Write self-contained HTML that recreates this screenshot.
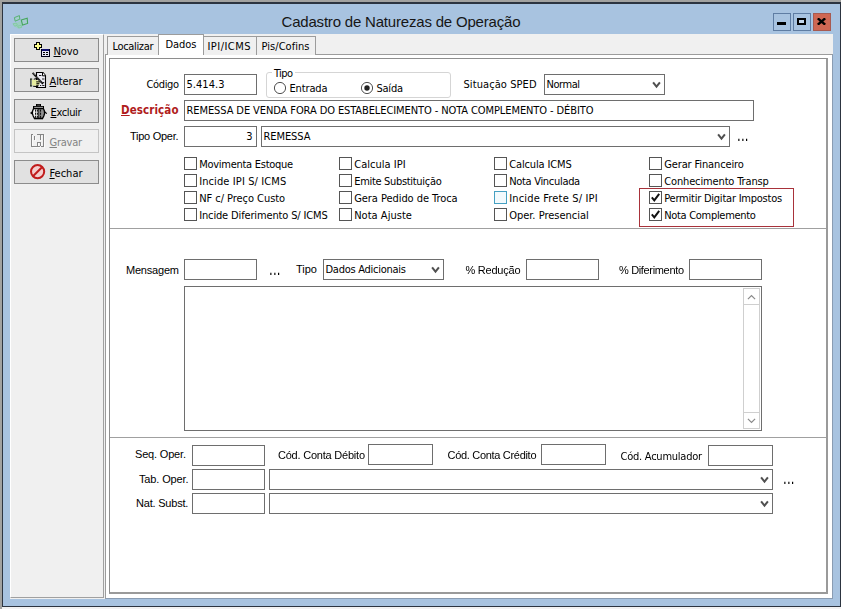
<!DOCTYPE html>
<html lang="pt-BR"><head><meta charset="utf-8"><title>Cadastro de Naturezas de Operação</title><style>
html,body{margin:0;padding:0;background:#a2a2a0;}
#w{position:relative;width:841px;height:609px;overflow:hidden;}
#w div,#w span{position:absolute;}
#w span u{position:static;}
.t{font:11px "DejaVu Sans Condensed","Liberation Sans",sans-serif;color:#000;white-space:nowrap;line-height:13px;}
.m{font:11px "Liberation Sans",sans-serif;color:#000;white-space:nowrap;line-height:13px;}
.title{font:15px "Liberation Sans",sans-serif;color:#161616;white-space:nowrap;line-height:20px;}
.dis{color:#838383;}
.dots{font-size:13px;transform:scaleY(1.35);transform-origin:0 11px;will-change:transform;}
.desc{font-weight:bold;color:#b01c1c;font-size:11.5px;}
</style></head><body><div id="w">
<div style="left:0px;top:0px;width:841px;height:609px;background:#a2a2a0;"></div>
<div style="left:2px;top:607px;width:839px;height:2px;background:#f2f2f2;"></div>
<div style="left:2px;top:2px;width:839px;height:605px;background:#2c3440;"></div>
<div style="left:3px;top:4px;width:837px;height:602px;background:#a8c3e0;"></div>
<span id="t0" class="title" style="left:281.5px;top:12px;letter-spacing:-0.192px;">Cadastro de Naturezas de Operação</span>
<svg style="position:absolute;left:10px;top:13px" width="20" height="18" viewBox="0 0 20 18"><path d="M2.5 10.5 L7 9.5 L10.5 8 L12.5 11.5 L12 14.8 L8 15.6 L4.5 13.5 Z" fill="#8fd6a8" opacity="0.55"/><path d="M4.4 4.6 L9.4 2.6 L9.8 6.2 L5.2 8.2 Z" fill="#a4d4c4" fill-opacity="0.6" stroke="#4fae68" stroke-width="0.9"/><path d="M11.2 7 L17.2 5.3 L17.6 10.4 L12.6 12 Z" fill="#a4d4c4" fill-opacity="0.5" stroke="#45a65c" stroke-width="1.1"/><path d="M3 10.8 L6.4 10 L7.4 12.2 L4.6 13.2 Z M7.6 13 L11.4 12.4 L11.6 14.4 L8.6 15 Z" fill="none" stroke="#7ccc98" stroke-width="0.7"/></svg>
<div style="left:773px;top:13px;width:18px;height:18px;border:1px solid #5f7da3;box-sizing:border-box;background:#a8c3e0;"><div style="left:3px;top:8px;width:9px;height:3px;background:#000"></div></div>
<div style="left:793px;top:13px;width:18px;height:18px;border:1px solid #5f7da3;box-sizing:border-box;background:#a8c3e0;"><div style="left:3px;top:4px;width:9px;height:7px;box-sizing:border-box;border:2px solid #000;background:#c4d6ea"></div></div>
<div style="left:813px;top:13px;width:18px;height:18px;border:1px solid #a85a50;box-sizing:border-box;background:#cf6753;"><svg style="position:absolute;left:3px;top:4px" width="9" height="7" viewBox="0 0 9 7"><path d="M0.8 0.3 L8.2 6.7 M8.2 0.3 L0.8 6.7" stroke="#000" stroke-width="2.3"/></svg></div>
<div style="left:10px;top:34px;width:823px;height:565px;background:#f0f0f0;"></div>
<div style="left:10px;top:34px;width:94px;height:564px;background:#f0f0f0;border:1px solid #fff;border-right-color:#a0a0a0;border-bottom-color:#a0a0a0;box-sizing:border-box;"></div>
<div style="left:14px;top:38px;width:85px;height:24px;background:#e1e1e1;border:1px solid #8c8c8c;box-sizing:border-box;"></div>
<span id="t1" class="t btn" style="left:53.5px;top:45px;letter-spacing:-0.125px;"><u>N</u>ovo</span>
<div style="left:14px;top:68px;width:85px;height:24px;background:#e1e1e1;border:1px solid #8c8c8c;box-sizing:border-box;"></div>
<span id="t2" class="t btn" style="left:49.5px;top:75px;letter-spacing:-0.117px;"><u>A</u>lterar</span>
<div style="left:14px;top:99px;width:85px;height:24px;background:#e1e1e1;border:1px solid #8c8c8c;box-sizing:border-box;"></div>
<span id="t3" class="t btn" style="left:50.5px;top:106px;letter-spacing:-0.37px;"><u>E</u>xcluir</span>
<div style="left:14px;top:129px;width:85px;height:24px;background:#f0f0f0;border:1px solid #c4c4c4;box-sizing:border-box;"></div>
<span id="t4" class="t btn dis" style="left:49.5px;top:136px;letter-spacing:-0.259px;"><u>G</u>ravar</span>
<div style="left:14px;top:160px;width:85px;height:24px;background:#e1e1e1;border:1px solid #8c8c8c;box-sizing:border-box;"></div>
<span id="t5" class="t btn" style="left:49.5px;top:167px;letter-spacing:-0.006px;"><u>F</u>echar</span>
<svg style="position:absolute;left:34px;top:42px" width="16" height="15" viewBox="0 0 16 15" shape-rendering="crispEdges"><rect x="2" y="0" width="4" height="8" fill="#000"/><rect x="0" y="2" width="8" height="4" fill="#000"/><rect x="3" y="1" width="2" height="6" fill="#ffff8c"/><rect x="1" y="3" width="6" height="2" fill="#ffff8c"/><rect x="7" y="7" width="9" height="8" fill="#000018"/><rect x="8" y="7" width="7" height="2" fill="#101070"/><rect x="8" y="9" width="7" height="5" fill="#e6e6f6"/><rect x="9" y="10" width="2" height="1" fill="#000"/><rect x="12" y="10" width="2" height="1" fill="#000"/><rect x="9" y="12" width="2" height="1" fill="#000"/><rect x="12" y="12" width="2" height="1" fill="#000"/></svg>
<svg style="position:absolute;left:30px;top:71px" width="17" height="18" viewBox="0 0 17 18"><path d="M6.5 1.5 H13 L15.5 4.5 V16.5 H6.5 Z" fill="#ececf4" stroke="#000" stroke-width="1.1"/><path d="M12.5 1.5 V4.8 H15.5" fill="#fff" stroke="#000" stroke-width="1"/><path d="M9 4.5 h2.4 M12 8 h2.4 M13 11.5 h1.2 M10 14.5 h1.2 M12.2 14.5 h2.2" stroke="#222" stroke-width="1.2" fill="none"/><path d="M2 8.8 L4 8.4 L7.5 9.3 L10 10.6 L9.6 13 L8.2 14.8 L2 14.6 Z" fill="#e6eda0"/><path d="M0.9 8 V15 M0 8 H2.2 M0 15 H2.2" stroke="#0a1a0a" stroke-width="1.1" fill="none"/><path d="M3.8 8.2 L6.5 7.6 L9.8 9.4 M6.2 10.9 H10.6 M6.4 12.7 H9.4 M6.4 14.3 H8.6 M3.2 15.3 L8.2 15.6" stroke="#000" stroke-width="1" fill="none"/><path d="M2.6 1.8 L13 12.8" stroke="#000" stroke-width="1.7"/><path d="M2.6 1.8 L12.2 12" stroke="#e8e8e8" stroke-width="0.7" stroke-dasharray="1 1"/></svg>
<svg style="position:absolute;left:30px;top:103px" width="18" height="17" viewBox="0 0 18 17"><defs><linearGradient id="tg" x1="0" x2="1" y1="0" y2="0"><stop offset="0" stop-color="#fff"/><stop offset="0.45" stop-color="#e8e8e8"/><stop offset="0.62" stop-color="#9a9a9a"/><stop offset="1" stop-color="#8c8c8c"/></linearGradient></defs><rect x="6" y="1" width="5" height="2.2" fill="#000"/><rect x="7.2" y="1.8" width="2.8" height="0.6" fill="#9a9a9a"/><rect x="3" y="3" width="11" height="2.8" fill="#000"/><rect x="4.2" y="3.9" width="8.8" height="0.7" fill="#f4f4f4"/><path d="M3.6 5.6 L2.6 8 L2.4 10.5 L3.2 13 L4.4 15.4 H12.6 L13.8 13 L14.6 10.5 L14.4 8 L13.4 5.6 Z" fill="url(#tg)" stroke="#000" stroke-width="1.3"/><path d="M5.6 6.5 V14.8 M7.4 6.5 V14.8 M10.6 6.5 V14.8" stroke="#000" stroke-width="1" stroke-dasharray="2.2 0.9"/><path d="M8.8 6 V15" stroke="#000" stroke-width="1"/><path d="M2.4 8.8 L0.9 9.9 L2.4 11 M14.6 8.8 L16.8 10.6" fill="none" stroke="#000" stroke-width="1.1"/><path d="M4 15.6 H13" stroke="#000" stroke-width="1.4"/></svg>
<svg style="position:absolute;left:31px;top:134px" width="15" height="15" viewBox="0 0 15 15" shape-rendering="crispEdges"><g fill="#fafafa"><rect x="1" y="1" width="1" height="12"/><rect x="2" y="13" width="8" height="1"/><rect x="13" y="1" width="1" height="13"/><rect x="4" y="3" width="1" height="4"/><rect x="10" y="2" width="1" height="5"/><rect x="7" y="9" width="1" height="4"/><rect x="10" y="9" width="1" height="4"/></g><g fill="#868686"><rect x="0" y="0" width="1" height="13"/><rect x="0" y="0" width="2" height="1"/><rect x="1" y="12" width="8" height="1"/><rect x="10" y="12" width="2" height="1"/><rect x="12" y="0" width="1" height="13"/><rect x="6" y="0" width="7" height="1"/><rect x="3" y="2" width="1" height="4"/><rect x="9" y="1" width="1" height="5"/><rect x="6" y="8" width="1" height="4"/><rect x="9" y="8" width="1" height="4"/><rect x="6" y="8" width="4" height="1"/></g></svg>
<svg style="position:absolute;left:29px;top:163px" width="17" height="17" viewBox="0 0 17 17"><circle cx="8.6" cy="8.6" r="6.6" fill="#f3cfcf" stroke="#c01c1c" stroke-width="2"/><path d="M4.2 13 L13 4.2" stroke="#c01c1c" stroke-width="2"/></svg>

<div style="left:105px;top:54px;width:728px;height:545px;background:#fff;border:1px solid #9c9c9c;border-right-color:#8a9cb2;border-bottom-color:#8a9cb2;box-sizing:border-box;"></div>
<div style="left:107px;top:36px;width:52px;height:19px;background:#f0f0f0;border:1px solid #9c9c9c;border-bottom:none;box-sizing:border-box;"></div>
<span id="t6" class="t" style="left:112.5px;top:40px;z-index:4;letter-spacing:-0.338px;">Localizar</span>
<div style="left:203px;top:36px;width:54px;height:19px;background:#f0f0f0;border:1px solid #9c9c9c;border-bottom:none;box-sizing:border-box;"></div>
<span id="t7" class="t" style="left:207.5px;top:40px;z-index:4;letter-spacing:0.458px;">IPI/ICMS</span>
<div style="left:256px;top:36px;width:60px;height:19px;background:#f0f0f0;border:1px solid #9c9c9c;border-bottom:none;box-sizing:border-box;"></div>
<span id="t8" class="t" style="left:261.5px;top:40px;z-index:4;letter-spacing:0.043px;">Pis/Cofins</span>
<div style="left:158px;top:34px;width:46px;height:21px;background:#fff;border:1px solid #9c9c9c;border-bottom:none;box-sizing:border-box;z-index:3;"></div>
<span id="t9" class="t" style="left:165.5px;top:38px;z-index:4;letter-spacing:-0.047px;">Dados</span>
<div style="left:109px;top:58px;width:719px;height:536px;border:1px solid #8e8e8e;border-right:2px solid #9a9a9a;border-bottom:2px solid #9a9a9a;box-sizing:border-box;background:#fff;"></div>
<div style="left:110px;top:228px;width:716px;height:1px;background:#a0a0a0;"></div>
<div style="left:110px;top:437px;width:716px;height:1px;background:#a0a0a0;"></div>
<span id="t10" class="t" style="left:146.5px;top:78px;letter-spacing:-0.369px;">Código</span>
<div style="left:184px;top:74px;width:73px;height:21px;border:1px solid #6e6e6e;box-sizing:border-box;background:#fff;"></div>
<span id="t11" class="t" style="left:186.5px;top:78px;letter-spacing:0.039px;">5.414.3</span>
<div style="left:266px;top:72px;width:185px;height:26px;border:1px solid #d5d5d5;border-radius:3px;box-sizing:border-box;"></div>
<div style="left:272px;top:70px;width:23px;height:6px;background:#fff;"></div>
<span id="t12" class="t" style="left:274.0px;top:67px;letter-spacing:-0.599px;">Tipo</span>
<svg style="position:absolute;left:273px;top:81px" width="14" height="14" viewBox="0 0 14 14"><circle cx="7" cy="7" r="5.6" fill="#fff" stroke="#505050" stroke-width="1"/></svg>
<span id="t13" class="t" style="left:289.5px;top:82px;letter-spacing:-0.148px;">Entrada</span>
<svg style="position:absolute;left:360px;top:81px" width="14" height="14" viewBox="0 0 14 14"><circle cx="7" cy="7" r="5.6" fill="#fff" stroke="#505050" stroke-width="1"/><circle cx="7" cy="7" r="2.7" fill="#222"/></svg>
<span id="t14" class="t" style="left:376.5px;top:82px;letter-spacing:-0.238px;">Saída</span>
<span id="t15" class="t" style="left:463.5px;top:78px;letter-spacing:0.077px;">Situação SPED</span>
<div style="left:544px;top:74px;width:121px;height:21px;border:1px solid #6e6e6e;box-sizing:border-box;background:#fff;"></div>
<svg style="position:absolute;left:651px;top:81px" width="11" height="8" viewBox="0 0 11 8"><path d="M2.1 1.3 L5.5 5.6 L8.9 1.3" fill="none" stroke="#505050" stroke-width="2"/></svg>
<span id="t16" class="t" style="left:546.5px;top:78px;letter-spacing:-0.459px;">Normal</span>
<span id="t17" class="t desc" style="left:121.0px;top:104px;letter-spacing:0.09px;"><u>D</u>escrição</span>
<div style="left:184px;top:100px;width:570px;height:21px;border:1px solid #6e6e6e;box-sizing:border-box;background:#fff;"></div>
<span id="t18" class="t" style="left:186.5px;top:104px;letter-spacing:-0.094px;">REMESSA DE VENDA FORA DO ESTABELECIMENTO - NOTA COMPLEMENTO - DÉBITO</span>
<span id="t19" class="m" style="left:130.0px;top:130px;letter-spacing:-0.273px;">Tipo Oper.</span>
<div style="left:184px;top:126px;width:73px;height:21px;border:1px solid #6e6e6e;box-sizing:border-box;background:#fff;"></div>
<span id="t20" class="t" style="right:588.5px;top:130px;">3</span>
<div style="left:261px;top:126px;width:469px;height:21px;border:1px solid #6e6e6e;box-sizing:border-box;background:#fff;"></div>
<svg style="position:absolute;left:716px;top:133px" width="11" height="8" viewBox="0 0 11 8"><path d="M2.1 1.3 L5.5 5.6 L8.9 1.3" fill="none" stroke="#505050" stroke-width="2"/></svg>
<span id="t21" class="t" style="left:263.5px;top:130px;letter-spacing:-0.078px;">REMESSA</span>
<span id="t22" class="dots t" style="left:737.1px;top:130px;letter-spacing:0.18px;">...</span>
<div style="left:184px;top:157px;width:13px;height:13px;border:1px solid #555;box-sizing:border-box;background:#fff;"></div>
<span id="t23" class="t" style="left:199.2px;top:158px;letter-spacing:-0.268px;">Movimenta Estoque</span>
<div style="left:339px;top:157px;width:13px;height:13px;border:1px solid #555;box-sizing:border-box;background:#fff;"></div>
<span id="t24" class="t" style="left:354.2px;top:158px;letter-spacing:0.03px;">Calcula IPI</span>
<div style="left:494px;top:157px;width:13px;height:13px;border:1px solid #555;box-sizing:border-box;background:#fff;"></div>
<span id="t25" class="t" style="left:509.2px;top:158px;letter-spacing:-0.142px;">Calcula ICMS</span>
<div style="left:649px;top:157px;width:13px;height:13px;border:1px solid #555;box-sizing:border-box;background:#fff;"></div>
<span id="t26" class="t" style="left:664.2px;top:158px;letter-spacing:-0.128px;">Gerar Financeiro</span>
<div style="left:184px;top:174px;width:13px;height:13px;border:1px solid #555;box-sizing:border-box;background:#fff;"></div>
<span id="t27" class="t" style="left:199.2px;top:175px;letter-spacing:0.102px;">Incide IPI S/ ICMS</span>
<div style="left:339px;top:174px;width:13px;height:13px;border:1px solid #555;box-sizing:border-box;background:#fff;"></div>
<span id="t28" class="t" style="left:354.2px;top:175px;letter-spacing:-0.314px;">Emite Substituição</span>
<div style="left:494px;top:174px;width:13px;height:13px;border:1px solid #555;box-sizing:border-box;background:#fff;"></div>
<span id="t29" class="t" style="left:509.2px;top:175px;letter-spacing:-0.305px;">Nota Vinculada</span>
<div style="left:649px;top:174px;width:13px;height:13px;border:1px solid #555;box-sizing:border-box;background:#fff;"></div>
<span id="t30" class="t" style="left:664.2px;top:175px;letter-spacing:-0.136px;">Conhecimento Transp</span>
<div style="left:184px;top:191px;width:13px;height:13px;border:1px solid #555;box-sizing:border-box;background:#fff;"></div>
<span id="t31" class="t" style="left:199.2px;top:192px;letter-spacing:-0.048px;">NF c/ Preço Custo</span>
<div style="left:339px;top:191px;width:13px;height:13px;border:1px solid #555;box-sizing:border-box;background:#fff;"></div>
<span id="t32" class="t" style="left:354.2px;top:192px;letter-spacing:-0.06px;">Gera Pedido de Troca</span>
<div style="left:494px;top:191px;width:13px;height:13px;border:1px solid #45a0c2;box-sizing:border-box;background:#f2fafd;"></div>
<span id="t33" class="t" style="left:509.2px;top:192px;letter-spacing:0.173px;">Incide Frete S/ IPI</span>
<div style="left:649px;top:191px;width:13px;height:13px;border:1px solid #555;box-sizing:border-box;background:#fff;"><svg style="position:absolute;left:0;top:0" width="11" height="11" viewBox="0 0 11 11"><path d="M1.8 5.4 L4.3 8.3 L9.2 1.9" fill="none" stroke="#111" stroke-width="2"/></svg></div>
<span id="t34" class="t" style="left:664.2px;top:192px;letter-spacing:-0.228px;">Permitir Digitar Impostos</span>
<div style="left:184px;top:208px;width:13px;height:13px;border:1px solid #555;box-sizing:border-box;background:#fff;"></div>
<span id="t35" class="t" style="left:199.2px;top:209px;letter-spacing:-0.146px;">Incide Diferimento S/ ICMS</span>
<div style="left:339px;top:208px;width:13px;height:13px;border:1px solid #555;box-sizing:border-box;background:#fff;"></div>
<span id="t36" class="t" style="left:354.2px;top:209px;letter-spacing:0.023px;">Nota Ajuste</span>
<div style="left:494px;top:208px;width:13px;height:13px;border:1px solid #555;box-sizing:border-box;background:#fff;"></div>
<span id="t37" class="t" style="left:509.2px;top:209px;letter-spacing:-0.008px;">Oper. Presencial</span>
<div style="left:649px;top:208px;width:13px;height:13px;border:1px solid #555;box-sizing:border-box;background:#fff;"><svg style="position:absolute;left:0;top:0" width="11" height="11" viewBox="0 0 11 11"><path d="M1.8 5.4 L4.3 8.3 L9.2 1.9" fill="none" stroke="#111" stroke-width="2"/></svg></div>
<span id="t38" class="t" style="left:664.2px;top:209px;letter-spacing:-0.301px;">Nota Complemento</span>
<div style="left:639px;top:188px;width:155px;height:39px;border:1px solid #a8323a;box-sizing:border-box;"></div>
<span id="t39" class="m" style="left:126.0px;top:264px;letter-spacing:-0.203px;">Mensagem</span>
<div style="left:184px;top:259px;width:73px;height:21px;border:1px solid #6e6e6e;box-sizing:border-box;background:#fff;"></div>
<span id="t40" class="dots t" style="left:269.1px;top:264px;letter-spacing:0.18px;">...</span>
<span id="t41" class="m" style="left:296.0px;top:263px;letter-spacing:0.0px;">Tipo</span>
<div style="left:323px;top:259px;width:121px;height:21px;border:1px solid #6e6e6e;box-sizing:border-box;background:#fff;"></div>
<svg style="position:absolute;left:430px;top:266px" width="11" height="8" viewBox="0 0 11 8"><path d="M2.1 1.3 L5.5 5.6 L8.9 1.3" fill="none" stroke="#505050" stroke-width="2"/></svg>
<span id="t42" class="t" style="left:325.5px;top:263px;letter-spacing:-0.261px;">Dados Adicionais</span>
<span id="t43" class="m" style="left:465.5px;top:264px;letter-spacing:-0.234px;">% Redução</span>
<div style="left:526px;top:259px;width:73px;height:21px;border:1px solid #6e6e6e;box-sizing:border-box;background:#fff;"></div>
<span id="t44" class="m" style="left:619.0px;top:264px;letter-spacing:-0.34px;">% Diferimento</span>
<div style="left:689px;top:259px;width:73px;height:21px;border:1px solid #6e6e6e;box-sizing:border-box;background:#fff;"></div>
<div style="left:184px;top:286px;width:578px;height:145px;border:1px solid #6e6e6e;box-sizing:border-box;background:#fff;"></div>
<div style="left:743px;top:288px;width:17px;height:141px;background:#fff;border:1px solid #cfcfcf;box-sizing:border-box;"></div>
<div style="left:743px;top:288px;width:17px;height:17px;background:#fff;border:1px solid #cfcfcf;box-sizing:border-box;"><svg style="position:absolute;left:3px;top:5px" width="9" height="6" viewBox="0 0 9 6"><path d="M0.9 5.2 L4.5 1.5 L8.1 5.2" fill="none" stroke="#8a8a8a" stroke-width="1.2"/></svg></div>
<div style="left:743px;top:412px;width:17px;height:17px;background:#fff;border:1px solid #cfcfcf;box-sizing:border-box;"><svg style="position:absolute;left:3px;top:5px" width="9" height="6" viewBox="0 0 9 6"><path d="M0.9 0.8 L4.5 4.5 L8.1 0.8" fill="none" stroke="#8a8a8a" stroke-width="1.2"/></svg></div>
<span id="t45" class="m" style="left:135.0px;top:448px;letter-spacing:-0.177px;">Seq. Oper.</span>
<div style="left:192px;top:445px;width:73px;height:21px;border:1px solid #6e6e6e;box-sizing:border-box;background:#fff;"></div>
<span id="t46" class="m" style="left:278.0px;top:449px;letter-spacing:-0.219px;">Cód. Conta Débito</span>
<div style="left:368px;top:444px;width:65px;height:21px;border:1px solid #6e6e6e;box-sizing:border-box;background:#fff;"></div>
<span id="t47" class="m" style="left:447.5px;top:449px;letter-spacing:-0.304px;">Cód. Conta Crédito</span>
<div style="left:541px;top:444px;width:65px;height:21px;border:1px solid #6e6e6e;box-sizing:border-box;background:#fff;"></div>
<span id="t48" class="t" style="left:620.5px;top:450px;letter-spacing:-0.241px;">Cód. Acumulador</span>
<div style="left:708px;top:445px;width:65px;height:21px;border:1px solid #6e6e6e;box-sizing:border-box;background:#fff;"></div>
<span id="t49" class="m" style="left:139.0px;top:473px;letter-spacing:-0.141px;">Tab. Oper.</span>
<div style="left:192px;top:469px;width:73px;height:21px;border:1px solid #6e6e6e;box-sizing:border-box;background:#fff;"></div>
<div style="left:269px;top:469px;width:504px;height:21px;border:1px solid #6e6e6e;box-sizing:border-box;background:#fff;"></div>
<svg style="position:absolute;left:759px;top:476px" width="11" height="8" viewBox="0 0 11 8"><path d="M2.1 1.3 L5.5 5.6 L8.9 1.3" fill="none" stroke="#505050" stroke-width="2"/></svg>
<span id="t50" class="dots t" style="left:783.1px;top:473px;letter-spacing:0.18px;">...</span>
<span id="t51" class="m" style="left:136.0px;top:497px;letter-spacing:-0.202px;">Nat. Subst.</span>
<div style="left:192px;top:493px;width:73px;height:21px;border:1px solid #6e6e6e;box-sizing:border-box;background:#fff;"></div>
<div style="left:269px;top:493px;width:504px;height:21px;border:1px solid #6e6e6e;box-sizing:border-box;background:#fff;"></div>
<svg style="position:absolute;left:759px;top:500px" width="11" height="8" viewBox="0 0 11 8"><path d="M2.1 1.3 L5.5 5.6 L8.9 1.3" fill="none" stroke="#505050" stroke-width="2"/></svg>
</div></body></html>
